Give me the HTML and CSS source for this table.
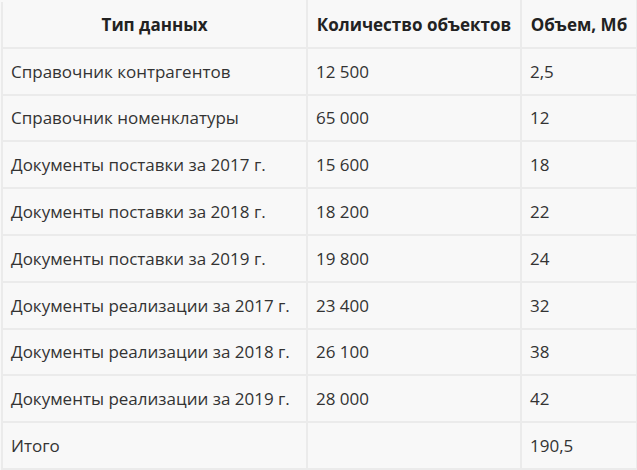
FILE: index.html
```html
<!DOCTYPE html>
<html lang="ru">
<head>
<meta charset="utf-8">
<link rel="stylesheet" href="styles.css">
</head>
<body>
<table class="data">
  <colgroup>
    <col class="c1"><col class="c2"><col class="c3">
  </colgroup>
  <thead>
    <tr><th>Тип данных</th><th>Количество объектов</th><th>Объем, Мб</th></tr>
  </thead>
  <tbody>
    <tr><td>Справочник контрагентов</td><td>12 500</td><td>2,5</td></tr>
    <tr><td>Справочник номенклатуры</td><td>65 000</td><td>12</td></tr>
    <tr><td>Документы поставки за 2017 г.</td><td>15 600</td><td>18</td></tr>
    <tr><td>Документы поставки за 2018 г.</td><td>18 200</td><td>22</td></tr>
    <tr><td>Документы поставки за 2019 г.</td><td>19 800</td><td>24</td></tr>
    <tr><td>Документы реализации за 2017 г.</td><td>23 400</td><td>32</td></tr>
    <tr><td>Документы реализации за 2018 г.</td><td>26 100</td><td>38</td></tr>
    <tr><td>Документы реализации за 2019 г.</td><td>28 000</td><td>42</td></tr>
    <tr><td>Итого</td><td></td><td>190,5</td></tr>
  </tbody>
</table>
</body>
</html>
```
FILE: styles.css
```css
html, body {
  margin: 0;
  padding: 0;
  background: #f8f8f8;
}
body {
  font-family: "Open Sans", "Noto Sans", sans-serif;
  color: #333;
}
.data {
  border-collapse: collapse;
  width: 637px;
  table-layout: fixed;
  margin: 0 0 0 1px;
  background: #f8f8f8;
}
.c1 { width: 305px; }
.c2 { width: 214px; }
.c3 { width: 116px; }
.data th, .data td {
  border: 2px solid #ebebeb;
  height: 44.8px;
  padding: 0 0 0 8px;
  font-size: 17px;
  text-align: left;
  white-space: nowrap;
  vertical-align: middle;
}
.data th {
  font-weight: 700;
  color: #222;
  text-align: center;
  padding: 0 4px;
}
.data tr:first-child th { border-top-color: #f8f8f8; }
```
